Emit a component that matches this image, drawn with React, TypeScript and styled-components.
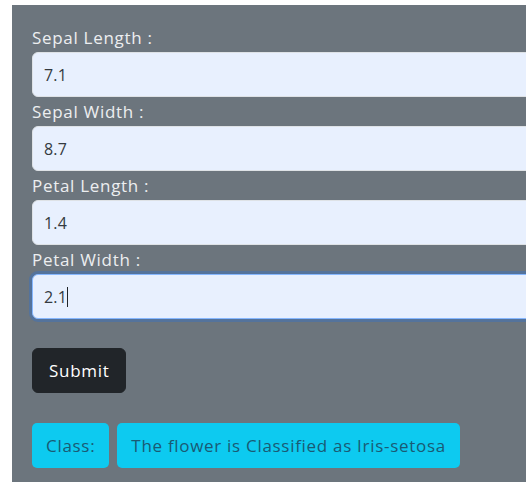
import { useEffect, useRef } from "react";
import styled, { createGlobalStyle } from "styled-components";

const GlobalStyle = createGlobalStyle`
	html, body {
		margin: 0;
		overflow: hidden;
		background: #fff;
	}
	body {
		padding: 5px 0 0 12px;
		font-family: "Open Sans", "Noto Sans", Arial, sans-serif;
		font-size: 17px;
		letter-spacing: 0.7px;
	}
`;

const Panel = styled.div`
	width: 720px;
	min-height: 600px;
	background: #6c757d;
	padding: 18px 20px 20px;
	box-sizing: border-box;
`;

const Form = styled.form`
	display: flex;
	flex-direction: column;
`;

const Field = styled.div`
	display: flex;
	flex-direction: column;
`;

const Label = styled.label`
	color: #eceef0;
	line-height: 29px;
	height: 29px;
`;

const InputWrap = styled.div`
	position: relative;
	font-size: 16px;
	letter-spacing: 0.2px;
`;

const Input = styled.input<{ $focused?: boolean }>`
	display: block;
	height: 45px;
	box-sizing: border-box;
	width: 100%;
	padding: 0 11px;
	font: inherit;
	letter-spacing: inherit;
	color: #343a40;
	background: #e8f0fe;
	border: 1px solid ${(p) => (p.$focused ? "#86b7fe" : "#dee2e6")};
	border-radius: 6px;
	outline: none;
	caret-color: transparent;
	box-shadow: ${(p) => (p.$focused ? "0 0 0 3px rgba(13, 110, 253, 0.25)" : "none")};
`;

/* steady text cursor drawn after the typed value */
const CaretLayer = styled.div`
	position: absolute;
	left: 12px;
	top: 0;
	height: 45px;
	display: flex;
	align-items: center;
	pointer-events: none;
	color: transparent;
	white-space: pre;
`;

const Caret = styled.span`
	display: inline-block;
	width: 1px;
	height: 20px;
	background: #212529;
`;

const SubmitButton = styled.button`
	align-self: flex-start;
	margin-top: 29px;
	height: 45px;
	padding: 0 16px;
	font: inherit;
	letter-spacing: inherit;
	color: #fff;
	background: #212529;
	border: 1px solid #212529;
	border-radius: 6px;
`;

const Result = styled.div`
	display: flex;
	gap: 8px;
	margin-top: 30px;
`;

const Tag = styled.div`
	height: 45px;
	display: flex;
	align-items: center;
	padding: 0 14px;
	background: #0dcaf0;
	color: #1a5a74;
	border-radius: 5px;
`;

const fields = [
	{ label: "Sepal Length :", value: "7.1" },
	{ label: "Sepal Width :", value: "8.7" },
	{ label: "Petal Length :", value: "1.4" },
	{ label: "Petal Width :", value: "2.1" },
];

export default function App() {
	const lastRef = useRef<HTMLInputElement>(null);

	useEffect(() => {
		const el = lastRef.current;
		if (el) {
			el.focus({ preventScroll: true });
			el.setSelectionRange(el.value.length, el.value.length);
		}
	}, []);

	return (
		<>
			<GlobalStyle />
			<Panel>
				<Form onSubmit={(e) => e.preventDefault()}>
					{fields.map((f, i) => {
						const last = i === fields.length - 1;
						return (
							<Field key={f.label}>
								<Label>{f.label}</Label>
								<InputWrap>
									<Input
										defaultValue={f.value}
										$focused={last}
										ref={last ? lastRef : undefined}
									/>
									{last && (
										<CaretLayer>
											{f.value}
											<Caret />
										</CaretLayer>
									)}
								</InputWrap>
							</Field>
						);
					})}
					<SubmitButton type="submit">Submit</SubmitButton>
				</Form>
				<Result>
					<Tag>Class:</Tag>
					<Tag>The flower is Classified as Iris-setosa</Tag>
				</Result>
			</Panel>
		</>
	);
}
